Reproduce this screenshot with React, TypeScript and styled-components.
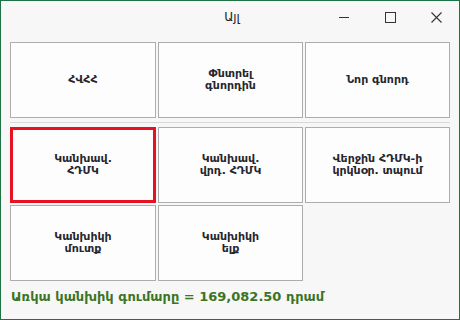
import styled, { createGlobalStyle } from "styled-components";

const GlobalStyle = createGlobalStyle`
  html, body {
    margin: 0;
    padding: 0;
    background: #f7f7f7;
  }
  body {
    font-family: "DejaVu Sans", "Noto Sans", sans-serif;
  }
`;

const Window = styled.div`
  width: 460px;
  height: 320px;
  box-sizing: border-box;
  border: 1px solid #1f7246;
  background: #f7f7f7;
  display: flex;
  flex-direction: column;
`;

const TitleBar = styled.div`
  height: 32px;
  display: grid;
  grid-template-columns: 1fr auto 1fr;
  align-items: center;
`;

const Title = styled.div`
  grid-column: 2;
  font-size: 12px;
  color: #222;
  padding-left: 4px;
`;

const Controls = styled.div`
  grid-column: 3;
  justify-self: end;
  display: flex;
  height: 100%;
`;

const ControlButton = styled.div`
  width: 46px;
  height: 100%;
  display: flex;
  align-items: center;
  justify-content: center;
  color: #333;
`;

const Content = styled.div`
  padding: 9px 9px 0 9px;
  display: flex;
  flex-direction: column;
`;

const Grid = styled.div`
  display: grid;
  grid-template-columns: 146px 145px 145px;
  grid-auto-rows: 76px;
  column-gap: 2px;
  row-gap: 2px;
`;

const Separator = styled.div`
  height: 1px;
  background: #d9d9d9;
  margin: 4px 0 4px 0;
  width: 440px;
`;

const ActionButton = styled.button<{ $focused?: boolean }>`
  box-sizing: border-box;
  margin: 0;
  padding: 0 6px;
  background: #fdfdfd;
  border: ${(p) => (p.$focused ? "3px solid #e81123" : "1px solid #adadad")};
  font-family: "DejaVu Sans", "Noto Sans", sans-serif;
  font-weight: bold;
  font-size: 11px;
  line-height: 12.5px;
  color: #26262e;
  white-space: pre-line;
  text-align: center;
  display: flex;
  align-items: center;
  justify-content: center;
`;

const Footer = styled.div`
  margin-top: 8px;
  font-weight: bold;
  font-size: 13px;
  color: #3a7424;
  padding-left: 1px;
`;

const firstRow = ["ՀՎՀՀ", "Փնտրել\nգնորդին", "Նոր գնորդ"];
const restRows = [
  "Կանխավ.\nՀԴՄԿ",
  "Կանխավ.\nվրդ. ՀԴՄԿ",
  "Վերջին ՀԴՄԿ-ի\nկրկնօր. տպում",
  "Կանխիկի\nմուտք",
  "Կանխիկի\nելք",
];

export default function App() {
  return (
    <>
      <GlobalStyle />
      <Window>
        <TitleBar>
          <Title>Այլ</Title>
          <Controls>
            <ControlButton>
              <svg width="10" height="10" viewBox="0 0 10 10">
                <path d="M0 5.5h10" stroke="#333" strokeWidth="1" />
              </svg>
            </ControlButton>
            <ControlButton>
              <svg width="11" height="11" viewBox="0 0 11 11">
                <rect x="0.5" y="0.5" width="10" height="10" fill="none" stroke="#333" strokeWidth="1" />
              </svg>
            </ControlButton>
            <ControlButton>
              <svg width="11" height="11" viewBox="0 0 11 11">
                <path d="M0.5 0.5l10 10M10.5 0.5l-10 10" stroke="#333" strokeWidth="1.1" />
              </svg>
            </ControlButton>
          </Controls>
        </TitleBar>
        <Content>
          <Grid>
            {firstRow.map((t) => (
              <ActionButton key={t}>{t}</ActionButton>
            ))}
          </Grid>
          <Separator />
          <Grid>
            {restRows.map((t, i) => (
              <ActionButton key={t} $focused={i === 0}>
                {t}
              </ActionButton>
            ))}
          </Grid>
          <Footer>Առկա կանխիկ գումարը = 169,082.50 դրամ</Footer>
        </Content>
      </Window>
    </>
  );
}
